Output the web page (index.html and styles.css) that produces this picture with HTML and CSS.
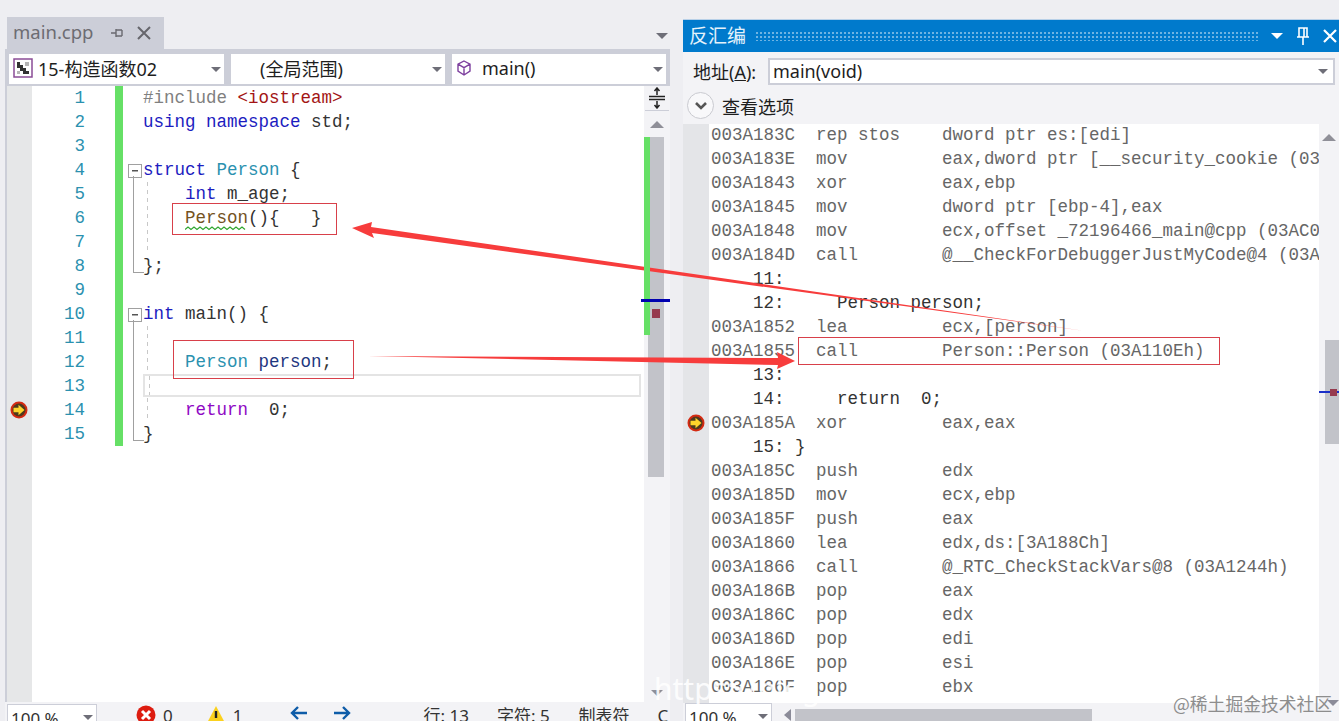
FILE: index.html
```html
<!DOCTYPE html>
<html lang="en">
  <head>
    <meta charset="UTF-8" />
    <title>main.cpp - 反汇编</title>
    <link rel="stylesheet" href="styles.css">
  </head>
  <body>
    <div class="workspace">
      <section class="editor-pane">
        <div class="tab-strip">
          <div class="tab">
            <span class="tab-name">main.cpp</span>
            <svg class="tab-pin" width="14" height="14" viewBox="0 0 14 14"><path d="M1 7h5M6 3v8M6 4h6M6 10h6M12 4v6" fill="none" stroke="#6a6a70" stroke-width="1.4"/></svg>
            <svg class="tab-close" width="16" height="16" viewBox="0 0 16 16"><path d="M2 2l12 12M14 2L2 14" stroke="#66666c" stroke-width="2"/></svg>
          </div>
          <span class="tab-menu"></span>
        </div>
        <div class="nav-bar">
          <div class="combo combo-project">
            <svg width="20" height="20" viewBox="0 0 20 20"><rect x="1" y="1" width="18" height="18" fill="#fff" stroke="#8a4c96" stroke-width="1.5"/><path d="M4 4h3v3h3v3h3v3h3v3h-6v-3H7v-3H4z" fill="#333"/><path d="M12 4h4v4h-4zM4 13h3v3H4z" fill="#b5b5b5"/></svg>
            <span>15-构造函数02</span><i class="caret"></i>
          </div>
          <div class="combo combo-scope"><span>(全局范围)</span><i class="caret"></i></div>
          <div class="combo combo-func">
            <svg width="18" height="18" viewBox="0 0 18 18"><path d="M9 2l6 3.2v7L9 16l-6-3.800v-7z M3 5.200l6 3.400 6-3.400M9 8.600V16" fill="none" stroke="#7d3f9e" stroke-width="1.400"/></svg>
            <span>main()</span><i class="caret"></i>
          </div>
        </div>
        <div class="editor-body">
          <div class="code-area">
            <div class="code-row"><span class="bp"></span><span class="num">1</span><span class="chg"></span><span class="fold"></span><span class="code"><span class="pre">#include</span> <span class="str">&lt;iostream&gt;</span></span></div>
            <div class="code-row"><span class="bp"></span><span class="num">2</span><span class="chg"></span><span class="fold"></span><span class="code"><span class="kw">using namespace</span> std;</span></div>
            <div class="code-row"><span class="bp"></span><span class="num">3</span><span class="chg"></span><span class="fold"></span><span class="code"></span></div>
            <div class="code-row"><span class="bp"></span><span class="num">4</span><span class="chg"></span><span class="fold fold-open"></span><span class="code"><span class="kw">struct</span> <span class="type">Person</span> {</span></div>
            <div class="code-row"><span class="bp"></span><span class="num">5</span><span class="chg"></span><span class="fold fold-line"></span><span class="code guide">    <span class="kw">int</span> m_age;</span></div>
            <div class="code-row"><span class="bp"></span><span class="num">6</span><span class="chg"></span><span class="fold fold-line"></span><span class="code guide">    <span class="fn">Person</span>(){   }</span></div>
            <div class="code-row"><span class="bp"></span><span class="num">7</span><span class="chg"></span><span class="fold fold-line"></span><span class="code guide"></span></div>
            <div class="code-row"><span class="bp"></span><span class="num">8</span><span class="chg"></span><span class="fold fold-end"></span><span class="code">};</span></div>
            <div class="code-row"><span class="bp"></span><span class="num">9</span><span class="chg"></span><span class="fold"></span><span class="code"></span></div>
            <div class="code-row"><span class="bp"></span><span class="num">10</span><span class="chg"></span><span class="fold fold-open"></span><span class="code"><span class="kw">int</span> main() {</span></div>
            <div class="code-row"><span class="bp"></span><span class="num">11</span><span class="chg"></span><span class="fold fold-line"></span><span class="code guide"></span></div>
            <div class="code-row"><span class="bp"></span><span class="num">12</span><span class="chg"></span><span class="fold fold-line"></span><span class="code guide">    <span class="type">Person</span> <span class="var">person</span>;</span></div>
            <div class="code-row"><span class="bp"></span><span class="num">13</span><span class="chg"></span><span class="fold fold-line"></span><span class="code guide current"></span></div>
            <div class="code-row">
              <span class="bp">
                <svg width="18" height="18" viewBox="0 0 18 18"><circle cx="9" cy="9" r="8.500" fill="#d42a12"/><circle cx="9" cy="9" r="6.500" fill="#4d3a1e"/><path d="M3.500 6.800h5V3.800L14.500 9l-6 5.200v-3h-5z" fill="#fdd52b"/></svg>
              </span>
              <span class="num">14</span><span class="chg"></span><span class="fold fold-line"></span><span class="code guide">    <span class="ctl">return</span>  0;</span>
            </div>
            <div class="code-row"><span class="bp"></span><span class="num">15</span><span class="chg"></span><span class="fold fold-end"></span><span class="code">}</span></div>
            <div class="code-rest"><span class="bp"></span></div>
          </div>
          <div class="v-scroll">
            <div class="split-btn">
              <svg width="20" height="22" viewBox="0 0 20 22"><path d="M10 1v7M7.500 4L10 1l2.500 3M10 21v-7M7.500 18L10 21l2.500-3M2 9.500h16M2 12.500h16" fill="none" stroke="#222" stroke-width="1.500"/></svg>
            </div>
            <i class="scroll-up"></i>
            <div class="scroll-track">
              <div class="scroll-green"></div>
              <div class="scroll-thumb"></div>
              <i class="mark-line"></i>
              <i class="mark-bp"></i>
            </div>
            <i class="scroll-down"></i>
          </div>
        </div>
        <div class="status-bar">
          <div class="zoom-combo"><span>100 %</span><i class="caret"></i></div>
          <svg class="st-err" width="20" height="20" viewBox="0 0 20 20"><circle cx="10" cy="10" r="9.500" fill="#dd1c10"/><path d="M6 6l8 8M14 6l-8 8" stroke="#fff" stroke-width="3"/></svg>
          <span class="st-errn">0</span>
          <svg class="st-warn" width="18" height="18" viewBox="0 0 18 18"><path d="M9 1l8.500 16H.5z" fill="#fbd11e"/><path d="M9 6v7" stroke="#222" stroke-width="2.400"/></svg>
          <span class="st-warnn">1</span>
          <svg class="st-back" width="20" height="16" viewBox="0 0 20 16"><path d="M18 8H3M9 2L3 8l6 6" fill="none" stroke="#0e5ca8" stroke-width="2.400"/></svg>
          <svg class="st-fwd" width="20" height="16" viewBox="0 0 20 16"><path d="M2 8h15M11 2l6 6-6 6" fill="none" stroke="#0e5ca8" stroke-width="2.400"/></svg>
          <span class="st-line">行: 13</span>
          <span class="st-col">字符: 5</span>
          <span class="st-tab">制表符</span>
          <span class="st-crlf">C</span>
        </div>
      </section>

      <section class="asm-pane">
        <div class="title-bar">
          <span class="title-text">反汇编</span>
          <span class="title-grip"></span>
          <i class="title-caret"></i>
          <svg class="title-pin" width="14" height="20" viewBox="0 0 14 20"><path d="M3 2h8v9H3zM8 2v9M1 11h12M7 11v8" fill="none" stroke="#fff" stroke-width="1.600"/></svg>
          <svg class="title-close" width="16" height="16" viewBox="0 0 16 16"><path d="M2 2l12 12M14 2L2 14" stroke="#fff" stroke-width="2.200"/></svg>
        </div>
        <div class="addr-bar">
          <span class="addr-label">地址(<u>A</u>):</span>
          <div class="addr-combo"><span>main(void)</span><i class="caret"></i></div>
        </div>
        <div class="view-opts">
          <span class="opts-btn"><svg width="14" height="10" viewBox="0 0 14 10"><path d="M2 2l5 5 5-5" fill="none" stroke="#555" stroke-width="2.600"/></svg></span>
          <span>查看选项</span>
        </div>
        <div class="asm-body">
          <div class="asm-gutter">
            <svg class="asm-bp" width="18" height="18" viewBox="0 0 18 18"><circle cx="9" cy="9" r="8.500" fill="#d42a12"/><circle cx="9" cy="9" r="6.500" fill="#4d3a1e"/><path d="M3.500 6.800h5V3.800L14.500 9l-6 5.200v-3h-5z" fill="#fdd52b"/></svg>
          </div>
          <div class="asm-code">
            <div>003A183C  rep stos    dword ptr es:[edi]</div>
            <div>003A183E  mov         eax,dword ptr [__security_cookie (03A</div>
            <div>003A1843  xor         eax,ebp</div>
            <div>003A1845  mov         dword ptr [ebp-4],eax</div>
            <div>003A1848  mov         ecx,offset _72196466_main@cpp (03AC0</div>
            <div>003A184D  call        @__CheckForDebuggerJustMyCode@4 (03A</div>
            <div class="src">    11: </div>
            <div class="src">    12:     Person person;</div>
            <div>003A1852  lea         ecx,[person]</div>
            <div>003A1855  call        Person::Person (03A110Eh)</div>
            <div class="src">    13: </div>
            <div class="src">    14:     return  0;</div>
            <div>003A185A  xor         eax,eax</div>
            <div class="src">    15: }</div>
            <div>003A185C  push        edx</div>
            <div>003A185D  mov         ecx,ebp</div>
            <div>003A185F  push        eax</div>
            <div>003A1860  lea         edx,ds:[3A188Ch]</div>
            <div>003A1866  call        @_RTC_CheckStackVars@8 (03A1244h)</div>
            <div>003A186B  pop         eax</div>
            <div>003A186C  pop         edx</div>
            <div>003A186D  pop         edi</div>
            <div>003A186E  pop         esi</div>
            <div>003A186F  pop         ebx</div>
          </div>
          <div class="asm-scroll">
            <i class="scroll-up"></i>
            <div class="asm-thumb"></div>
            <i class="asm-mark-line"></i>
            <i class="asm-mark-bp"></i>
            <i class="asm-scroll-down"></i>
          </div>
        </div>
        <div class="asm-status">
          <div class="zoom-combo"><span>100 %</span><i class="caret"></i></div>
          <i class="h-left"></i>
          <div class="h-thumb"></div>
        </div>
      </section>
    </div>

    <!-- annotations drawn on top of the screenshot -->
    <div class="note-box note-ctor"></div>
    <div class="note-box note-person"></div>
    <div class="note-box note-call"></div>
    <svg class="note-arrows" width="1339" height="721" viewBox="0 0 1339 721">
      <path d="M1085 331L372 233 L374 238 L352 228 L372 222 L371 227Z" fill="#f73c3c"/>
      <path d="M368 356L778 358L777 352L795 361L777 369L778 365Z" fill="#f73c3c"/>
    </svg>
    <svg class="squiggle" width="62" height="5" viewBox="0 0 62 5"><path d="M0 3.500l3-2.500 3 2.500 3-2.500 3 2.500 3-2.500 3 2.500 3-2.500 3 2.500 3-2.500 3 2.500 3-2.500 3 2.500 3-2.500 3 2.500 3-2.500 3 2.500 3-2.500 3 2.500 3-2.500 3 2.500" fill="none" stroke="#2ea52e" stroke-width="1.200"/></svg>
    <span class="wm-link">https://blog</span>
    <span class="wm-site">@稀土掘金技术社区</span>
  </body>
</html>
```

FILE: styles.css
```css
* {
  margin: 0;
  padding: 0;
  box-sizing: border-box;
}

html,
body {
  width: 1339px;
  height: 721px;
  overflow: hidden;
}

body {
  position: relative;
  background: #eeeef2;
  color: #1e1e1e;
  font-family: "Noto Sans", "Noto Sans CJK SC", sans-serif;
  font-size: 18px;
}

i {
  display: block;
}

.workspace {
  display: flex;
  align-items: flex-start;
  gap: 13px;
  padding-left: 5px;
}

/* left: source editor */
.editor-pane {
  width: 665px;
  height: 740px;
  padding-top: 17px;
  display: flex;
  flex-direction: column;
}

.tab-strip {
  height: 32px;
  padding-left: 2px;
  display: flex;
  justify-content: space-between;
  align-items: center;
}

.tab {
  width: 157px;
  height: 32px;
  background: #ccced8;
  display: flex;
  align-items: center;
  padding-left: 6px;
}

.tab-name {
  width: 97px;
  font-size: 18.500px;
  margin-top: -3px;
  color: #6c6c72;
}

.tab-pin {
  margin-right: 13px;
}

.tab-close {
  margin-left: -1px;
}

.tab-menu {
  width: 0;
  height: 0;
  margin: 6px 2px 0 0;
  border-left: 6px solid transparent;
  border-right: 6px solid transparent;
  border-top: 6px solid #6e6e78;
}

.nav-bar {
  height: 37px;
  padding: 5px 2px 2px 4px;
  background: #ccced8;
  display: flex;
  gap: 7px;
}

.combo {
  height: 30px;
  padding-bottom: 3px;
  background: #fff;
  display: flex;
  align-items: center;
  position: relative;
}

.combo-project {
  width: 215px;
  padding-left: 4px;
  gap: 5px;
}

.combo-scope {
  width: 214px;
  padding-left: 29px;
}

.combo-func {
  width: 214px;
  padding-left: 3px;
  gap: 9px;
}

.caret {
  width: 0;
  height: 0;
  border-left: 5px solid transparent;
  border-right: 5px solid transparent;
  border-top: 5px solid #6e6e78;
  position: absolute;
  right: 3px;
  top: 50%;
  margin-top: -2px;
}

.editor-body {
  flex: 1;
  display: flex;
  min-height: 0;
  padding-left: 2px;
  background: #ccced8;
}

.code-area {
  width: 637px;
  background: #fff;
  display: flex;
  flex-direction: column;
  font-family: "Liberation Mono", monospace;
  font-size: 17.500px;
}

.code-row {
  display: flex;
  height: 24px;
  line-height: 24px;
  flex-shrink: 0;
}

.bp {
  width: 25px;
  background: #e6e7e8;
  display: flex;
  align-items: center;
  justify-content: center;
  padding-right: 2px;
  flex-shrink: 0;
}

.code-rest {
  flex: 1;
  display: flex;
}

.num {
  width: 53px;
  text-align: right;
  color: #2b91af;
  flex-shrink: 0;
}

.chg {
  width: 8px;
  margin-left: 30px;
  background: #66e066;
  flex-shrink: 0;
}

.fold {
  width: 20px;
  flex-shrink: 0;
  position: relative;
}

.fold-open::before {
  content: "";
  position: absolute;
  left: 5px;
  top: 6px;
  width: 12px;
  height: 12px;
  border: 1px solid #a0a0a0;
  background: linear-gradient(#555, #555) center / 6px 1.500px no-repeat #fff;
}

.fold-open::after {
  content: "";
  position: absolute;
  left: 10px;
  top: 18px;
  bottom: 0;
  border-left: 1.500px solid #a0a0a0;
}

.fold-line::before {
  content: "";
  position: absolute;
  left: 10px;
  top: 0;
  bottom: 0;
  border-left: 1.500px solid #a0a0a0;
}

.fold-end::before {
  content: "";
  position: absolute;
  left: 10px;
  top: 0;
  height: 18px;
  width: 10px;
  border-left: 1.500px solid #a0a0a0;
  border-bottom: 1.500px solid #a0a0a0;
}

.code {
  flex: 1;
  white-space: pre;
  color: #333;
  min-width: 0;
}

.guide {
  background: repeating-linear-gradient(#c8c8c8 0 4px, transparent 4px 8px) 4px 0 / 1px 100% no-repeat;
}

.current {
  border: 2px solid #e4e4e4;
  margin: 0 3px 2px 0;
  height: 23px;
}

.pre { color: #808080; }
.str { color: #a31515; }
.kw { color: #1c1cc0; }
.type { color: #2b91af; }
.fn { color: #74531f; }
.var { color: #1f377f; }
.ctl { color: #8f08c4; }

.v-scroll {
  width: 26px;
  background: #f3f3f6;
  position: relative;
  display: flex;
  flex-direction: column;
  align-items: center;
}

.split-btn {
  width: 24px;
  height: 25px;
  display: flex;
  align-items: center;
  justify-content: center;
  border-bottom: 1px solid #ccced8;
}

.scroll-up {
  width: 0;
  height: 0;
  margin-top: 10px;
  border-left: 7px solid transparent;
  border-right: 7px solid transparent;
  border-bottom: 7px solid #8f8f98;
}

.scroll-track {
  position: relative;
  width: 26px;
  flex: 1;
  margin-top: 9px;
}

.scroll-green {
  position: absolute;
  z-index: 1;
  left: 0;
  top: 0;
  width: 6px;
  height: 198px;
  background: #66e066;
}

.scroll-thumb {
  position: absolute;
  left: 4px;
  top: 0;
  width: 16px;
  height: 340px;
  background: #c2c3c9;
}

.mark-line {
  position: absolute;
  z-index: 2;
  left: -3px;
  top: 162px;
  width: 29px;
  height: 3px;
  background: #0000b0;
}

.mark-bp {
  position: absolute;
  z-index: 2;
  left: 8px;
  top: 172px;
  width: 8px;
  height: 9px;
  background: #963a4e;
}

.scroll-down {
  width: 0;
  height: 0;
  margin-bottom: 6px;
  border-left: 6px solid transparent;
  border-right: 6px solid transparent;
  border-top: 6px solid #8f8f98;
}

.status-bar {
  height: 38px;
  padding-left: 2px;
  background: #f3f3f6;
  display: flex;
  align-items: flex-start;
  line-height: 24px;
  font-size: 17px;
  overflow: hidden;
  color: #333;
}

.zoom-combo {
  width: 90px;
  height: 30px;
  border: 1px solid #ccced8;
  background: #fff;
  padding-left: 3px;
  position: relative;
  flex-shrink: 0;
  line-height: 27px;
  margin-top: 2px;
}

.zoom-combo .caret {
  top: 12px;
}

.status-bar svg {
  margin-top: 3px;
  flex-shrink: 0;
}

.st-err { margin-left: 39px; }
.st-errn { margin-left: 7px; margin-top: 2px; }
.st-warn { margin-left: 34px; }
.st-warnn { margin-left: 8px; margin-top: 2px; }
.st-back { margin-left: 47px; }
.st-fwd { margin-left: 23px; }
.st-line { margin-left: 71px; margin-top: 2px; white-space: nowrap; }
.st-col { margin-left: 28px; margin-top: 2px; white-space: nowrap; }
.st-tab { margin-left: 29px; margin-top: 2px; white-space: nowrap; }
.st-crlf { margin-left: 28px; margin-top: 2px; }

/* right: disassembly */
.asm-pane {
  width: 656px;
  padding-top: 19px;
  display: flex;
  flex-direction: column;
  background: linear-gradient(#eeeef2 0 19px, #f3f3f6 19px);
}

.title-bar {
  height: 33px;
  flex-shrink: 0;
  background: #007acc;
  border-top: 1px solid #b8d0e8;
  display: flex;
  align-items: center;
  color: #fff;
  padding-left: 6px;
  position: relative;
}

.title-text {
  width: 66px;
  font-size: 19px;
  margin-top: -3px;
  color: #e4f2fb;
}

.title-grip {
  width: 503px;
  height: 10px;
  background: radial-gradient(circle, #6fb4e3 1px, transparent 1.200px) 0 0 / 4px 4px;
}

.title-caret {
  width: 0;
  height: 0;
  margin-left: 13px;
  border-left: 6px solid transparent;
  border-right: 6px solid transparent;
  border-top: 6px solid #fff;
}

.title-pin {
  margin-left: 13px;
}

.title-close {
  margin-left: 12px;
}

.addr-bar {
  height: 36px;
  flex-shrink: 0;
  display: flex;
  align-items: center;
  padding-left: 10px;
  gap: 7px;
}

.addr-label {
  width: 68px;
  white-space: nowrap;
  margin-top: 1px;
}

.addr-combo {
  width: 567px;
  height: 27px;
  margin-top: 2px;
  background: #fff;
  border: 2px solid #ccced8;
  padding-left: 3px;
  line-height: 23px;
  position: relative;
}

.addr-combo .caret {
  right: 5px;
}

.view-opts {
  height: 36px;
  flex-shrink: 0;
  display: flex;
  align-items: center;
  padding: 0 0 1px 4px;
  gap: 8px;
}

.opts-btn {
  width: 27px;
  height: 27px;
  border: 1px solid #c9cad0;
  border-radius: 50%;
  background: #f8f8fa;
  display: flex;
  align-items: center;
  justify-content: center;
}

.asm-body {
  display: flex;
  height: 579px;
  flex-shrink: 0;
}

.asm-gutter {
  width: 26px;
  background: #e4e5e8;
  position: relative;
}

.asm-bp {
  position: absolute;
  left: 4px;
  top: 290px;
}

.asm-code {
  flex: 1;
  min-width: 0;
  overflow: hidden;
  background: #fff;
  padding-left: 2px;
  font-family: "Liberation Mono", monospace;
  font-size: 17.500px;
  line-height: 24px;
  color: #666;
}

.asm-code div {
  white-space: pre;
}

.asm-code div:first-child {
  margin-top: -1px;
}

.asm-code .src {
  color: #333;
}

.asm-scroll {
  width: 20px;
  position: relative;
  background: #f3f3f6;
  display: flex;
  flex-direction: column;
  align-items: center;
}

.asm-thumb {
  position: absolute;
  right: 0;
  top: 216px;
  width: 14px;
  height: 104px;
  background: #c2c3c9;
}

.asm-mark-line {
  position: absolute;
  right: 0;
  top: 267px;
  width: 20px;
  height: 2px;
  background: #1a2fc8;
}

.asm-mark-bp {
  position: absolute;
  right: 2px;
  top: 265px;
  width: 7px;
  height: 7px;
  background: #963a4e;
}

.asm-scroll-down {
  position: absolute;
  right: 0;
  bottom: -3px;
  width: 0;
  height: 0;
  border-left: 6px solid transparent;
  border-right: 6px solid transparent;
  border-top: 6px solid #8b8b98;
}

.asm-status {
  height: 40px;
  display: flex;
  align-items: flex-start;
  padding-left: 2px;
  font-size: 17px;
  color: #333;
}

.asm-status .zoom-combo {
  width: 87px;
  margin-top: 0;
}

.h-left {
  width: 0;
  height: 0;
  margin: 6px 0 0 12px;
  border-top: 6px solid transparent;
  border-bottom: 6px solid transparent;
  border-right: 7px solid #8b8b98;
}

.h-thumb {
  width: 297px;
  height: 20px;
  margin: 6px 0 0 4px;
  background: #c2c3c9;
}

/* annotations */
.note-box {
  position: absolute;
  border: 1px solid #d8404a;
}

.note-ctor {
  left: 172px;
  top: 203px;
  width: 165px;
  height: 32px;
}

.note-person {
  left: 173px;
  top: 340px;
  width: 181px;
  height: 39px;
}

.note-call {
  left: 798px;
  top: 337px;
  width: 422px;
  height: 28px;
}

.note-arrows {
  position: absolute;
  left: 0;
  top: 0;
}

.squiggle {
  position: absolute;
  left: 185px;
  top: 226px;
}

.wm-link {
  position: absolute;
  left: 654px;
  top: 668px;
  font-size: 30px;
  color: rgba(255, 255, 255, 0.9);
}

.wm-site {
  position: absolute;
  left: 1173px;
  top: 690px;
  font-size: 17.800px;
  color: #8d8d8d;
  font-family: "Noto Sans CJK SC", sans-serif;
}
```
